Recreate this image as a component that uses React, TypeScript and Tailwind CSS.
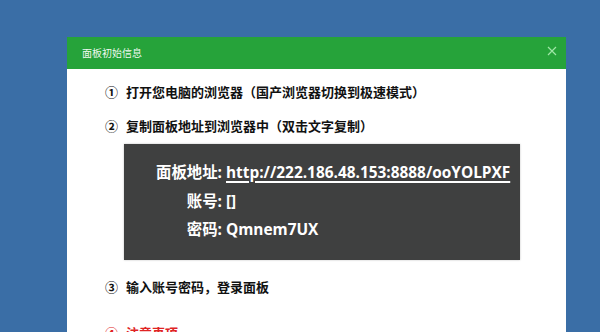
import React from 'react';

const font = { fontFamily: '"Open Sans", "Noto Sans CJK SC", sans-serif' };

const Step: React.FC<{ n: string; text: string; className?: string }> = ({ n, text, className }) => (
  <div className={`flex items-center gap-2 h-5 text-[13px] font-bold leading-5 ${className ?? 'text-[#111]'}`}>
    <span className="w-[13px] text-center">{n}</span>
    <span>{text}</span>
  </div>
);

const rows = [
  { label: '面板地址:', value: 'http://222.186.48.153:8888/ooYOLPXF', link: true },
  { label: '账号:', value: '[]', link: false },
  { label: '密码:', value: 'Qmnem7UX', link: false },
];

export default function App() {
  return (
    <div className="h-[332px] w-[600px] overflow-hidden bg-[#3a6ea6] pt-[37px] pl-[67px]" style={font}>
      <div className="w-[499px] bg-white h-[320px]">
        <div className="flex h-[32px] items-center justify-between bg-[#26a33a] pl-[15px] pr-[9px]">
          <span className="text-[10px] text-white/95">面板初始信息</span>
          <svg width="10" height="10" viewBox="0 0 10 10" className="-mt-[4px]">
            <path d="M1 1L9 9M9 1L1 9" stroke="#9fe6a6" strokeWidth="1.2" />
          </svg>
        </div>
        <div className="pl-[38px] pt-[13px]">
          <Step n="①" text="打开您电脑的浏览器（国产浏览器切换到极速模式）" />
          <Step n="②" text="复制面板地址到浏览器中（双击文字复制）" className="mt-[14px] text-[#111]" />
          <div className="ml-[19px] mt-[8px] h-[116px] w-[396px] bg-[#3f4040] pt-[19px] shadow-[0_0_2px_rgba(0,0,0,0.25)]">
            <div className="grid grid-cols-[98px_1fr] gap-y-[8.5px] text-[15.4px] font-bold leading-5 text-white">
              {rows.map((r) => (
                <React.Fragment key={r.label}>
                  <span className="text-right">{r.label}</span>
                  <span
                    className={`pl-[4px] ${r.link ? 'underline decoration-[1.5px] underline-offset-[3px]' : ''}`}
                  >
                    {r.value}
                  </span>
                </React.Fragment>
              ))}
            </div>
          </div>
          <Step n="③" text="输入账号密码，登录面板" className="mt-[17px] text-[#111]" />
          <Step n="④" text="注意事项" className="mt-[26px] text-[#e02424]" />
        </div>
      </div>
    </div>
  );
}
